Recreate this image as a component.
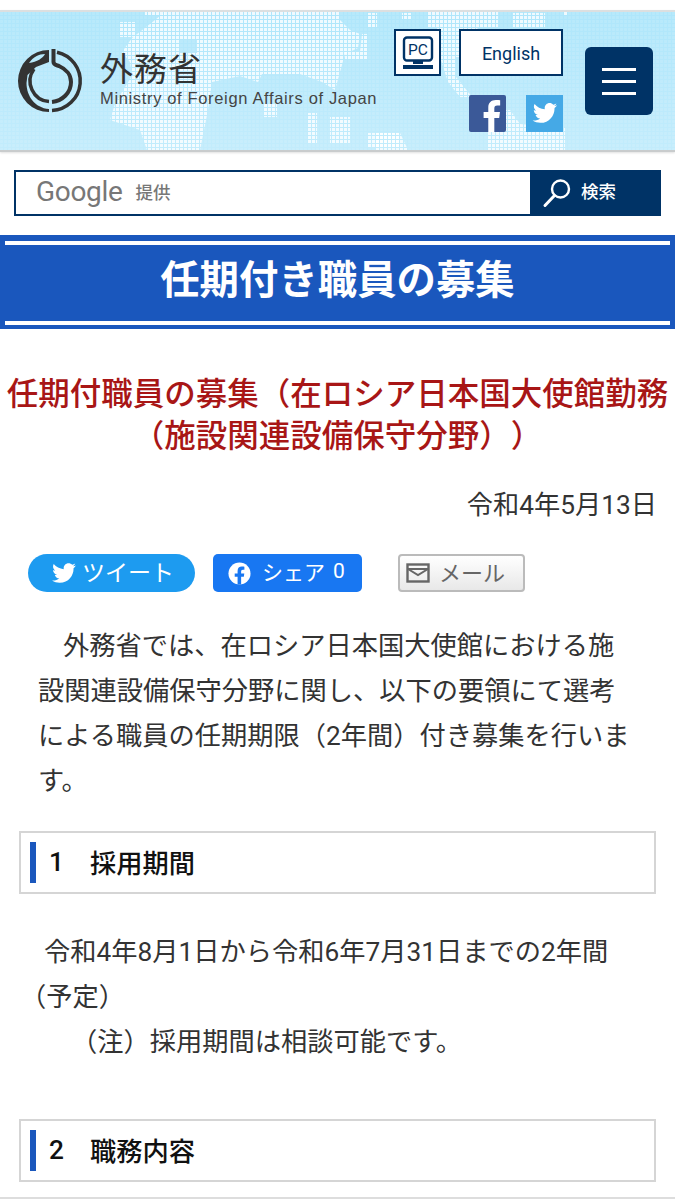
<script>
	const sections = [
		{ no: '1', title: '採用期間' },
		{ no: '2', title: '職務内容' }
	];
</script>

<div class="page">
	<header class="header">
		<svg class="map" viewBox="0 0 675 138" aria-hidden="true">
			<defs>
				<pattern id="dots" width="4" height="4" patternUnits="userSpaceOnUse">
					<rect width="3" height="3" fill="#fff" opacity="0.78" />
				</pattern>
				<pattern id="fine" width="4" height="4" patternUnits="userSpaceOnUse">
					<rect width="3" height="3" fill="#fff" opacity="0.12" />
				</pattern>
			</defs>
			<rect width="675" height="138" fill="url(#fine)" />
			<path
				fill="url(#dots)"
				fill-rule="evenodd"
				d="M165 0H340V8L350 18L360 22L358 36L345 42L340 60L335 78L322 70L300 62L262 62L258 70L240 64L212 70L208 98L200 138H147L140 118L110 108L115 92L122 80L132 64L130 50L122 40L132 26L150 12ZM180 28H197V41H180Z"
			/>
			<path
				fill="url(#dots)"
				d="M120 10H135V25H120ZM145 0H165V4H145ZM362 22H368V48H345V40H360ZM367 1H377V15H367ZM307 101H317V131H307ZM330 105H350V131H330ZM367 121H400V135H367ZM263 91H277V105H263Z"
			/>
			<path
				fill="url(#dots)"
				d="M428 0H498V15H478L470 40L462 45H456V65L472 85H460L448 70L440 45L437 15H428ZM402 1H412V8H402ZM513 1H545V15H513ZM488 98H510L520 112L565 116V138H488ZM375 121H400L408 138H375ZM563 0H568V4H563Z"
			/>
		</svg>
		<div class="brand">
			<svg class="crest" viewBox="0 0 80 80" aria-hidden="true">
				<path
					fill="#333"
					d="M39 10A31 31 0 0 0 39 72V69C25 68 16.500 56 16.500 43L17.500 35L26 27L39 22Z"
				/>
				<path d="M39 61.500A20.500 20.500 0 0 1 24 29" fill="none" stroke="#333" stroke-width="3.500" />
				<path d="M19 23C23 17 29 14 35 14C33 18 27 22 19 23Z" fill="#b8e9fb" />
				<path d="M47 12.200A29.500 29.500 0 0 1 42 70.500" fill="none" stroke="#333" stroke-width="3.500" />
				<path
					d="M43.500 9V22C43.500 25 46 25 49 26C56 29 61 35 61 42C61 53 52 61 42 62"
					fill="none"
					stroke="#333"
					stroke-width="4"
				/>
			</svg>
			<div class="brand-text">
				<div class="ja">外務省</div>
				<div class="en">Ministry of Foreign Affairs of Japan</div>
			</div>
		</div>
		<div class="tools">
			<div class="tool-top">
				<a class="pc" href="#pc" aria-label="PC">
					<svg viewBox="0 0 32 34" aria-hidden="true">
						<rect x="2" y="1.500" width="28" height="23" rx="3" fill="none" stroke="#003366" stroke-width="2.400" />
						<rect x="11" y="25" width="10" height="3" fill="#003366" />
						<rect x="1" y="29" width="30" height="4" fill="#003366" />
						<text x="16" y="19" text-anchor="middle" class="pc-label">PC</text>
					</svg>
				</a>
				<a class="english" href="#en">English</a>
			</div>
			<div class="social">
				<svg class="fb" viewBox="0 0 38 38" aria-hidden="true">
					<rect width="38" height="38" rx="2" fill="#3b5998" />
					<path
						fill="#fff"
						d="M26 38V23.500H31L31.800 17.500H26V14C26 12 26.800 10.800 29 10.800H32V5.500C31 5.300 29.500 5.200 27.500 5.200C23 5.200 19.800 8 19.800 13V17.500H15V23.500H19.800V38Z"
					/>
				</svg>
				<svg class="tw" viewBox="0 0 38 38" aria-hidden="true">
					<rect width="38" height="38" fill="#45a9e6" />
					<path
						fill="#fff"
						d="M32 10.500C31 11 30 11.300 29 11.400C30 10.800 30.800 9.800 31.200 8.700C30.200 9.300 29.100 9.700 28 9.900C27 8.900 25.700 8.300 24.300 8.300C21.500 8.300 19.200 10.600 19.200 13.400C19.200 13.800 19.200 14.200 19.300 14.600C15 14.400 11.300 12.300 8.800 9.200C8.300 10 8.100 10.900 8.100 11.800C8.100 13.600 9 15.100 10.300 16C9.500 16 8.700 15.800 8 15.400V15.500C8 18 9.800 20 12.100 20.500C11.300 20.700 10.500 20.700 9.800 20.600C10.400 22.600 12.300 24.100 14.500 24.100C12.700 25.500 10.500 26.300 8 26.300H6.800C9.100 27.800 11.800 28.600 14.700 28.600C24.100 28.600 29.300 20.800 29.300 14V13.400C30.300 12.600 31.200 11.600 32 10.500Z"
					/>
				</svg>
			</div>
		</div>
		<button class="menu" aria-label="menu"><span></span><span></span><span></span></button>
	</header>

	<div class="search">
		<div class="search-input">
			<span class="google">Google</span>
			<span class="provided">提供</span>
		</div>
		<div class="search-btn">
			<svg viewBox="0 0 30 30" aria-hidden="true">
				<circle cx="18.500" cy="11" r="8.500" fill="none" stroke="#fff" stroke-width="2.400" />
				<path d="M12.500 17.500L3 27.500" stroke="#fff" stroke-width="3" stroke-linecap="round" />
			</svg>
			<span>検索</span>
		</div>
	</div>

	<div class="band"><h1>任期付き職員の募集</h1></div>

	<h2 class="title">任期付職員の募集（在ロシア日本国大使館勤務<br />（施設関連設備保守分野））</h2>

	<p class="date">令和4年5月13日</p>

	<div class="share">
		<a class="tweet" href="#t">
			<svg viewBox="0 0 24 24" aria-hidden="true">
				<path
					fill="#fff"
					d="M23 5C22.200 5.400 21.300 5.600 20.400 5.700C21.300 5.100 22 4.300 22.400 3.300C21.500 3.800 20.500 4.200 19.500 4.400C18.700 3.500 17.500 3 16.200 3C13.700 3 11.700 5 11.700 7.500C11.700 7.900 11.700 8.200 11.800 8.500C8 8.300 4.700 6.500 2.500 3.800C2.100 4.500 1.900 5.300 1.900 6.100C1.900 7.700 2.700 9 3.900 9.800C3.200 9.800 2.500 9.600 1.900 9.300V9.300C1.900 11.500 3.500 13.300 5.500 13.700C4.800 13.900 4.100 13.900 3.500 13.800C4 15.600 5.700 16.900 7.700 17C6.100 18.200 4.200 18.900 2 18.900H1C3 20.200 5.400 21 8 21C16.300 21 20.800 14.100 20.800 8.200V7.600C21.700 7 22.400 6 23 5Z"
				/>
			</svg>
			<span>ツイート</span>
		</a>
		<a class="fshare" href="#f">
			<svg viewBox="0 0 24 24" aria-hidden="true">
				<circle cx="12" cy="12" r="11.500" fill="#fff" />
				<path
					fill="#1877f2"
					d="M16.500 15.500L17 12H13.700V9.800C13.700 8.800 14.200 8 15.600 8H17.100V5C17.100 5 15.700 4.800 14.400 4.800C11.700 4.800 10 6.400 10 9.300V12H7V15.500H10V23.500H13.700V15.500Z"
				/>
			</svg>
			<span>シェア</span>
			<span class="count">0</span>
		</a>
		<a class="mail" href="#m">
			<svg viewBox="0 0 24 20" aria-hidden="true">
				<rect x="1.500" y="1.500" width="21" height="17" fill="none" stroke="#666" stroke-width="2.400" />
				<path d="M2 6H22M2 6L12 12L22 6" fill="none" stroke="#666" stroke-width="2" />
			</svg>
			<span>メール</span>
		</a>
	</div>

	<p class="lead">外務省では、在ロシア日本国大使館における施設関連設備保守分野に関し、以下の要領にて選考による職員の任期期限（2年間）付き募集を行います。</p>

	<h3 class="section"><span class="no">{sections[0].no}</span>{sections[0].title}</h3>

	<div class="body">
		<p class="period">令和4年8月1日から令和6年7月31日までの2年間（予定）</p>
		<p class="note">（注）採用期間は相談可能です。</p>
	</div>

	<h3 class="section second"><span class="no">{sections[1].no}</span>{sections[1].title}</h3>

	<div class="rule"></div>
</div>

<style>
	:global(body) {
		margin: 0;
		background: #fff;
	}
	.page {
		width: 675px;
		height: 1200px;
		overflow: hidden;
		padding-top: 10px;
		box-sizing: border-box;
		font-family: "Roboto", "Noto Sans CJK JP", sans-serif;
		color: #222;
		text-spacing-trim: space-all;
	}
	.header {
		position: relative;
		height: 138px;
		display: flex;
		align-items: flex-start;
		border-top: 2px solid #dcdfe0;
		border-bottom: 2px solid #c9cccd;
		background: linear-gradient(#aee6fb, #c2ecfc);
		box-shadow: 0 1px 2px rgba(0, 0, 0, 0.12);
	}
	.map {
		position: absolute;
		inset: 0;
		width: 100%;
		height: 100%;
		filter: blur(0.4px);
	}
	.brand {
		position: relative;
		display: flex;
		gap: 10px;
		margin: 28px 0 0 10px;
	}
	.crest {
		width: 80px;
		height: 80px;
	}
	.ja {
		font-family: "Noto Sans CJK JP", sans-serif;
		font-size: 33px;
		line-height: 36px;
		margin-top: 9px;
		letter-spacing: 1px;
		color: #333;
	}
	.en {
		font-family: "Liberation Sans", sans-serif;
		font-size: 16.500px;
		line-height: 18px;
		margin-top: 4px;
		letter-spacing: 0.65px;
		color: #444;
		white-space: nowrap;
	}
	.tools {
		position: relative;
		margin: 17px 0 0 auto;
		width: 169px;
	}
	.tool-top {
		display: flex;
		gap: 18px;
	}
	.pc {
		width: 47px;
		height: 47px;
		flex: none;
		box-sizing: border-box;
		border: 2px solid #003366;
		background: #fff;
		display: flex;
		align-items: center;
		justify-content: center;
	}
	.pc svg {
		width: 32px;
		height: 34px;
	}
	.pc-label {
		font-family: "Roboto", sans-serif;
		font-size: 15.500px;
		fill: #003366;
	}
	.english {
		width: 104px;
		height: 47px;
		box-sizing: border-box;
		border: 2px solid #003366;
		background: #fff;
		color: #003366;
		font-size: 18px;
		text-decoration: none;
		display: flex;
		align-items: center;
		justify-content: center;
		padding-top: 1px;
	}
	.social {
		display: flex;
		justify-content: flex-end;
		gap: 20px;
		margin-top: 19px;
	}
	.fb,
	.tw {
		width: 37px;
		height: 37px;
	}
	.menu {
		position: relative;
		margin: 35px 22px 0 22px;
		width: 68px;
		height: 68px;
		flex: none;
		border: 0;
		border-radius: 6px;
		background: #003366;
		padding: 0;
		display: flex;
		flex-direction: column;
		align-items: center;
		justify-content: center;
		gap: 9px;
	}
	.menu span {
		width: 34px;
		height: 3px;
		background: #fff;
	}
	.search {
		display: flex;
		height: 46px;
		margin: 18px 14px 0;
		box-sizing: border-box;
		border: 2px solid #003366;
	}
	.search-input {
		flex: 1;
		display: flex;
		align-items: center;
		padding-left: 20px;
		background: #fff;
		color: #777;
	}
	.google {
		font-family: "Roboto", sans-serif;
		font-size: 28px;
		letter-spacing: -0.3px;
		margin-top: -4px;
	}
	.provided {
		font-size: 17.500px;
		font-weight: 500;
		margin-left: 13px;
		margin-top: -3px;
	}
	.search-btn {
		width: 129px;
		background: #003366;
		color: #fff;
		display: flex;
		align-items: center;
		gap: 9px;
		padding-left: 12px;
		box-sizing: border-box;
		font-size: 17.500px;
		font-weight: 500;
	}
	.search-btn span {
		margin-top: -5px;
	}
	.search-btn svg {
		width: 30px;
		height: 30px;
	}
	.band {
		height: 94px;
		margin-top: 19px;
		background: #1a57bd;
		padding: 6px 5px 4px;
		box-sizing: border-box;
	}
	.band h1 {
		margin: 0;
		height: 100%;
		box-sizing: border-box;
		border-top: 4px solid #fff;
		border-bottom: 4px solid #fff;
		color: #fff;
		font-size: 39.400px;
		font-weight: 700;
		text-align: center;
		line-height: 72px;
	}
	.title {
		margin: 45px 0 0;
		text-align: center;
		color: #a81616;
		font-size: 31.500px;
		font-weight: 500;
		line-height: 42px;
		white-space: nowrap;
	}
	.date {
		margin: 26px 18px 0 0;
		text-align: right;
		font-size: 26.250px;
		line-height: 42px;
		color: #333;
	}
	.share {
		display: flex;
		align-items: center;
		margin: 28px 0 0 28px;
	}
	.share a {
		box-sizing: border-box;
		height: 38px;
		display: flex;
		align-items: center;
		text-decoration: none;
	}
	.share span {
		margin-top: -4px;
	}
	.tweet {
		width: 167px;
		border-radius: 19px;
		background: #1d9bf0;
		color: #fff;
		font-size: 23px;
		gap: 5px;
		padding-left: 23px;
	}
	.tweet svg {
		width: 26px;
		height: 26px;
	}
	.fshare {
		width: 149px;
		margin-left: 18px;
		border-radius: 5px;
		background: #1877f2;
		color: #fff;
		font-size: 21px;
		padding-left: 15px;
	}
	.fshare svg {
		width: 23px;
		height: 23px;
		margin-right: 11px;
	}
	.count {
		margin-left: 8px;
	}
	.mail {
		width: 127px;
		margin-left: 36px;
		border: 2px solid #bbb;
		border-radius: 4px;
		background: linear-gradient(#fff, #e8e8e8);
		color: #666;
		font-size: 22px;
		padding-left: 6px;
		gap: 9px;
	}
	.mail svg {
		width: 24px;
		height: 20px;
	}
	.lead {
		margin: 32px 40px 0 38px;
		font-size: 26.250px;
		line-height: 45px;
		text-indent: 25px;
		color: #333;
	}
	.section {
		margin: 27px 19px 0;
		height: 63px;
		box-sizing: border-box;
		border: 2px solid #d5d5d5;
		display: flex;
		align-items: center;
		font-size: 26.250px;
		font-weight: 500;
		color: #111;
		position: relative;
		padding-left: 28px;
		padding-bottom: 2px;
	}
	.section::before {
		content: "";
		position: absolute;
		left: 9px;
		top: 9px;
		bottom: 9px;
		width: 6px;
		background: #1a57bd;
	}
	.no {
		width: 41px;
	}
	.second {
		margin-top: 54px;
	}
	.body {
		margin-top: 36px;
		padding-left: 20px;
		padding-right: 62px;
		font-size: 26.250px;
		line-height: 45px;
		color: #333;
	}
	.body p {
		margin: 0;
	}
	.period {
		text-indent: 24px;
	}
	.note {
		padding-left: 51px;
	}
	.rule {
		margin-top: 15px;
		height: 2px;
		background: #ddd;
	}
</style>
